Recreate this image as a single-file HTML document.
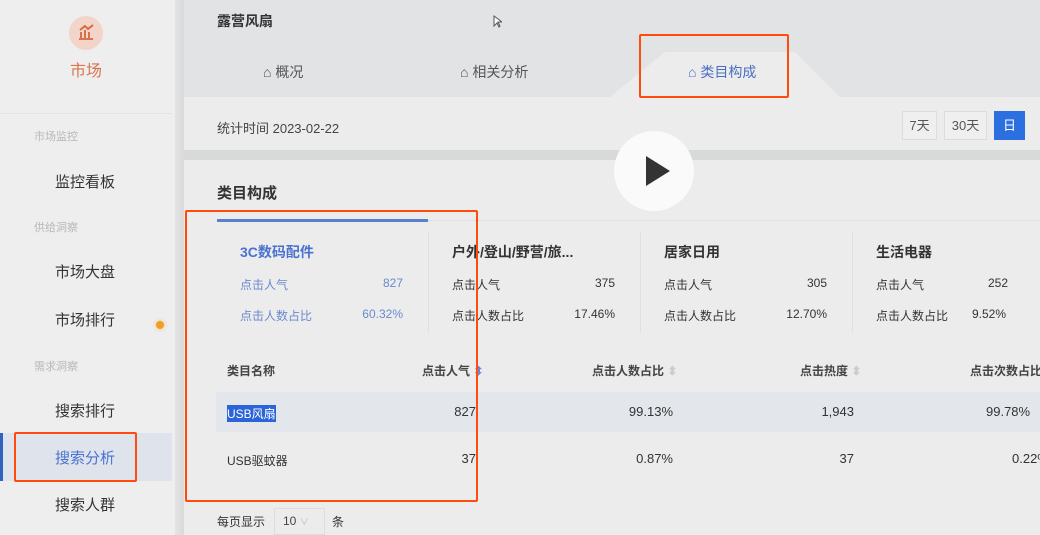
<!DOCTYPE html>
<html><head><meta charset="utf-8"><style>
*{margin:0;padding:0;box-sizing:border-box}
body{width:1040px;height:535px;overflow:hidden;position:relative;background:#ececec;font-family:"Liberation Sans","Noto Sans CJK SC",sans-serif;color:#333}
.a{position:absolute;white-space:nowrap}
.sec{font-size:11px;color:#b8b8b8}
.it{font-size:15px;color:#333}
.f12{font-size:12px}
.f13{font-size:13px}
.ob{position:absolute;border:2.5px solid #ff4a10;border-radius:2px}
.btn{position:absolute;top:111px;height:29px;border:1px solid #dcdcdc;background:#efefef;font-size:13px;color:#555;text-align:center;line-height:27px}
.r{text-align:right}
</style></head><body>
<!-- sidebar -->
<div class="a" style="left:0;top:0;width:175px;height:535px;background:#eeeeee"></div>
<div class="a" style="left:175px;top:0;width:9px;height:535px;background:linear-gradient(90deg,#e4e4e4,#d9d9d9)"></div>
<div class="a" style="left:69px;top:16px;width:34px;height:34px;border-radius:50%;background:#f2d4c8"></div>
<svg class="a" style="left:76px;top:22px" width="20" height="20" viewBox="0 0 20 20" fill="none" stroke="#d4673f" stroke-width="1.8"><path d="M3 17h14M5 16V10M9 16V8M13 16V10M4 8l5-4 3 3 5-4"/></svg>
<div class="a" style="left:70px;top:57px;font-size:16px;color:#d9744e">市场</div>
<div class="a" style="left:0;top:113px;width:172px;height:1px;background:#e2e2e2"></div>
<div class="a sec" style="left:34px;top:128px">市场监控</div>
<div class="a it" style="left:55px;top:171px">监控看板</div>
<div class="a sec" style="left:34px;top:219px">供给洞察</div>
<div class="a it" style="left:55px;top:261px">市场大盘</div>
<div class="a it" style="left:55px;top:309px">市场排行</div>
<div class="a" style="left:156px;top:321px;width:8px;height:8px;border-radius:50%;background:#f0a020;box-shadow:0 0 4px #f6c070"></div>
<div class="a sec" style="left:34px;top:358px">需求洞察</div>
<div class="a it" style="left:55px;top:400px">搜索排行</div>
<div class="a" style="left:0;top:433px;width:172px;height:48px;background:#dfe4ec"></div>
<div class="a" style="left:0;top:433px;width:3px;height:48px;background:#2f63c0"></div>
<div class="a it" style="left:55px;top:447px;color:#4a72d0">搜索分析</div>
<div class="a it" style="left:55px;top:494px">搜索人群</div>
<!-- header -->
<div class="a" style="left:184px;top:0;width:856px;height:97px;background:#e1e3e5"></div>
<div class="a" style="left:217px;top:11px;font-size:14px;font-weight:bold;color:#333">露营风扇</div>
<svg class="a" style="left:493px;top:15px" width="9" height="13" viewBox="0 0 9 13"><path d="M1 1v10l3-3 2 4 1-1-2-4h4z" fill="#fff" stroke="#555"/></svg>
<svg class="a" style="left:0;top:0" width="1040" height="100"><path d="M610 97 L665 52 L795 52 L840 97 Z" fill="#ececec"/></svg>
<div class="a" style="left:263px;top:62px;font-size:14px;color:#555">⌂ 概况</div>
<div class="a" style="left:460px;top:62px;font-size:14px;color:#555">⌂ 相关分析</div>
<div class="a" style="left:688px;top:62px;font-size:14px;color:#4a6fc0">⌂ 类目构成</div>
<div class="a" style="left:184px;top:97px;width:856px;height:53px;background:#ececec"></div>
<div class="a" style="left:217px;top:118px;font-size:13px;color:#444">统计时间 2023-02-22</div>
<div class="btn" style="left:902px;width:35px">7天</div>
<div class="btn" style="left:944px;width:43px">30天</div>
<div class="btn" style="left:994px;width:31px;background:#2c6fe0;border-color:#2c6fe0;color:#fff">日</div>
<div class="a" style="left:184px;top:150px;width:856px;height:10px;background:#d8d9d9"></div>
<!-- card -->
<div class="a" style="left:217px;top:182px;font-size:15px;font-weight:bold;color:#333">类目构成</div>
<div class="a" style="left:217px;top:220px;width:823px;height:1px;background:#e0e0e0"></div>
<div class="a" style="left:217px;top:219px;width:211px;height:3px;background:#5b7fd0"></div>
<div class="a" style="left:428px;top:232px;width:1px;height:100px;background:#e0e0e0"></div>
<div class="a" style="left:640px;top:232px;width:1px;height:100px;background:#e0e0e0"></div>
<div class="a" style="left:852px;top:232px;width:1px;height:100px;background:#e0e0e0"></div>
<div class="a" style="left:240px;top:242px;font-size:14px;font-weight:bold;color:#4a72d0">3C数码配件</div>
<div class="a f12" style="left:240px;top:276px;color:#6a8ad0">点击人气</div>
<div class="a f12 r" style="left:340px;width:63px;top:276px;color:#6a8ad0">827</div>
<div class="a f12" style="left:240px;top:307px;color:#6a8ad0">点击人数占比</div>
<div class="a f12 r" style="left:340px;width:63px;top:307px;color:#6a8ad0">60.32%</div>
<div class="a" style="left:452px;top:242px;font-size:14px;font-weight:bold">户外/登山/野营/旅...</div>
<div class="a f12" style="left:452px;top:276px">点击人气</div>
<div class="a f12 r" style="left:550px;width:65px;top:276px">375</div>
<div class="a f12" style="left:452px;top:307px">点击人数占比</div>
<div class="a f12 r" style="left:550px;width:65px;top:307px">17.46%</div>
<div class="a" style="left:664px;top:242px;font-size:14px;font-weight:bold">居家日用</div>
<div class="a f12" style="left:664px;top:276px">点击人气</div>
<div class="a f12 r" style="left:760px;width:67px;top:276px">305</div>
<div class="a f12" style="left:664px;top:307px">点击人数占比</div>
<div class="a f12 r" style="left:760px;width:67px;top:307px">12.70%</div>
<div class="a" style="left:876px;top:242px;font-size:14px;font-weight:bold">生活电器</div>
<div class="a f12" style="left:876px;top:276px">点击人气</div>
<div class="a f12" style="left:988px;top:276px">252</div>
<div class="a f12" style="left:876px;top:307px">点击人数占比</div>
<div class="a f12" style="left:972px;top:307px">9.52%</div>
<!-- table -->
<div class="a f12" style="left:227px;top:362px;font-weight:bold;color:#444">类目名称</div>
<div class="a f12" style="left:422px;top:362px;font-weight:bold;color:#444">点击人气 <span style="color:#6a8ad0">⬍</span></div>
<div class="a f12" style="left:592px;top:362px;font-weight:bold;color:#444">点击人数占比 <span style="color:#ccc">⬍</span></div>
<div class="a f12" style="left:800px;top:362px;font-weight:bold;color:#444">点击热度 <span style="color:#ccc">⬍</span></div>
<div class="a f12" style="left:970px;top:362px;font-weight:bold;color:#444">点击次数占比</div>
<div class="a" style="left:216px;top:392px;width:824px;height:40px;background:#e3e6eb"></div>
<div class="a f12" style="left:227px;top:405px;background:#2a64d8;color:#fff">USB风扇</div>
<div class="a f13 r" style="left:400px;width:76px;top:404px">827</div>
<div class="a f13 r" style="left:590px;width:83px;top:404px">99.13%</div>
<div class="a f13 r" style="left:780px;width:74px;top:404px">1,943</div>
<div class="a f13" style="left:986px;top:404px">99.78%</div>
<div class="a f12" style="left:227px;top:452px">USB驱蚊器</div>
<div class="a f13 r" style="left:400px;width:76px;top:451px">37</div>
<div class="a f13 r" style="left:590px;width:83px;top:451px">0.87%</div>
<div class="a f13 r" style="left:780px;width:74px;top:451px">37</div>
<div class="a f13" style="left:1012px;top:451px">0.22%</div>
<div class="a f12" style="left:217px;top:513px">每页显示</div>
<div class="a f12" style="left:274px;top:508px;width:51px;height:27px;border:1px solid #ddd;padding:5px 8px;color:#444">10 <span style="color:#bbb;font-size:9px">∨</span></div>
<div class="a f12" style="left:332px;top:513px">条</div>
<!-- play -->
<div class="a" style="left:614px;top:131px;width:80px;height:80px;border-radius:50%;background:#fafafa"></div>
<svg class="a" style="left:645px;top:156px" width="26" height="30" viewBox="0 0 26 30"><path d="M1 0L25 15L1 30Z" fill="#333"/></svg>
<!-- orange boxes -->
<div class="ob" style="left:639px;top:34px;width:150px;height:64px"></div>
<div class="ob" style="left:185px;top:210px;width:293px;height:292px"></div>
<div class="ob" style="left:14px;top:432px;width:123px;height:50px"></div>
</body></html>
